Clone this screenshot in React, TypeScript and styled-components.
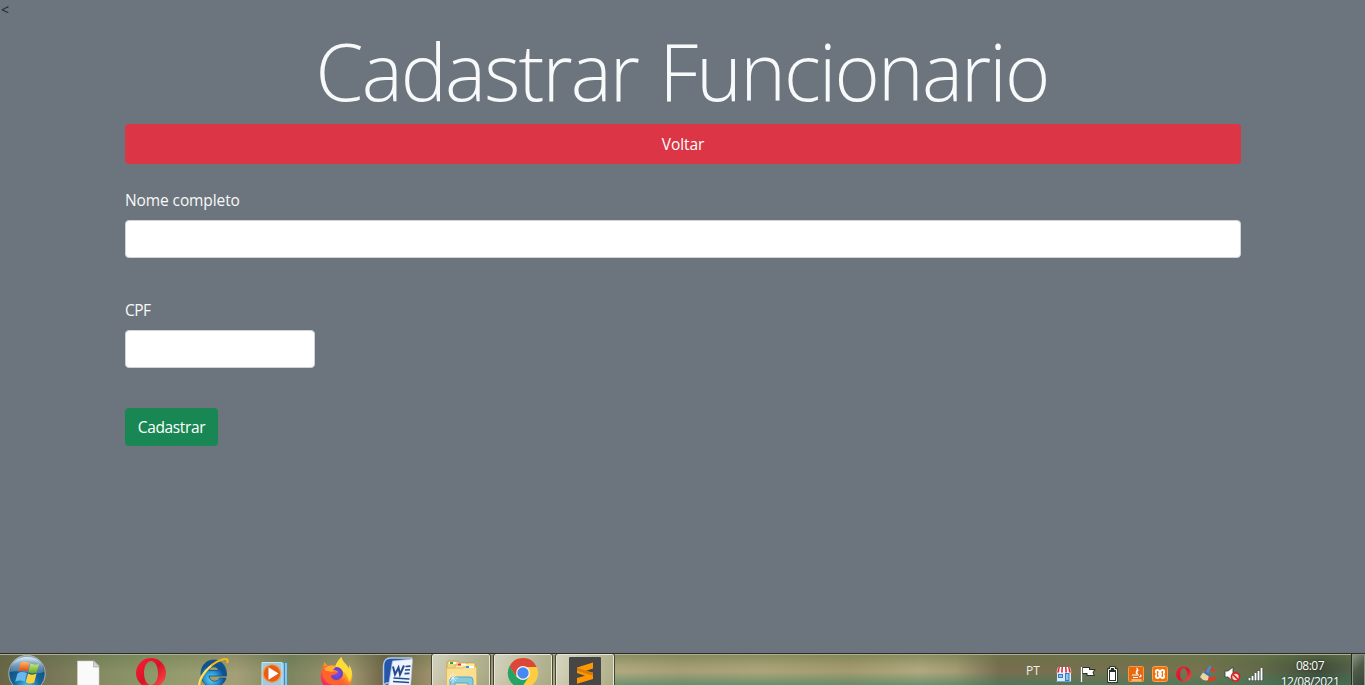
import React from "react";
import styled, { createGlobalStyle } from "styled-components";

const GlobalStyle = createGlobalStyle`
  *, *::before, *::after { box-sizing: border-box; }
  html, body { margin: 0; padding: 0; }
  body {
    background: #6c757d;
    color: #212529;
    font-family: "Open Sans", "Noto Sans", sans-serif;
    font-size: 16px;
    line-height: 24px;
    overflow: hidden;
  }
`;

const Screen = styled.div`
  display: flex;
  flex-direction: column;
  height: 685px;
  width: 1365px;
  overflow: hidden;
`;

const Page = styled.main`
  flex: 1;
  min-height: 0;
`;

const Stray = styled.div`
  height: 24px;
  padding: 1px 0 0 1px;
  font-size: 14px;
  line-height: 18px;
`;

const Container = styled.div`
  width: 1116px;
  margin-left: 125px;
`;

const Title = styled.h1`
  margin: 0 0 4px;
  height: 96px;
  line-height: 92px;
  font-size: 80px;
  font-weight: 300;
  letter-spacing: -1.9px;
  word-spacing: 3px;
  text-indent: -2px;
  text-align: center;
  white-space: nowrap;
  color: #f8f9fa;
  transform: scaleX(0.967);
`;

const Button = styled.button<{ $tone: "danger" | "success"; $wide?: boolean }>`
  display: block;
  width: ${(p) => (p.$wide ? "100%" : "93px")};
  height: ${(p) => (p.$wide ? "40px" : "38px")};
  padding: 0;
  border: 0;
  border-radius: 4px;
  background: ${(p) => (p.$tone === "danger" ? "#dc3545" : "#198754")};
  color: #fff;
  font: inherit;
  font-size: 15.5px;
  letter-spacing: ${(p) => (p.$wide ? "-0.1px" : "-0.35px")};
`;

const Form = styled.form`
  padding-top: 24px;
`;

const Field = styled.div<{ $gap: number }>`
  margin-bottom: ${(p) => p.$gap}px;
`;

const Label = styled.label<{ $spacing?: number }>`
  display: block;
  height: 24px;
  margin-bottom: 8px;
  font-size: 15.5px;
  letter-spacing: ${(p) => p.$spacing ?? -0.1}px;
  color: #f8f9fa;
`;

const Input = styled.input<{ $width: string }>`
  display: block;
  width: ${(p) => p.$width};
  height: 38px;
  padding: 6px 12px;
  border: 1px solid #ced4da;
  border-radius: 4px;
  background: #fff;
  font: inherit;
`;

const Taskbar = styled.footer`
  display: flex;
  height: 32px;
  flex: none;
  overflow: hidden;
  border-top: 1px solid #2b2b28;
  box-shadow: inset 0 1px 0 #aeb096;
  background:
    linear-gradient(180deg, rgba(110, 130, 70, 0.35) 0%, rgba(130, 130, 85, 0) 35%, rgba(130, 130, 85, 0) 55%, rgba(50, 125, 95, 0.55) 100%) 615px 0 / 750px 100% no-repeat,
    linear-gradient(180deg, rgba(80, 100, 60, 0.3) 0%, rgba(130, 130, 85, 0) 60%),
    linear-gradient(90deg, #696648 0, #777557 50px, #858c62 105px, #8c9969 150px, #a49f76 235px, #7c8560 290px,
      #a09770 350px, #6f6548 385px, #9b9069 430px, #b4ab80 620px, #aaa078 680px, #b0a67b 760px, #a79c70 850px,
      #b4aa80 920px, #a79e75 955px, #796e50 1000px, #79704f 1060px, #777550 1200px, #616949 1265px,
      #3f4b39 1320px, #536048 1350px, #45523e 1365px);
`;

const StartButton = styled.div`
  width: 57px;
  height: 31px;
  flex: none;
`;

const Task = styled.div<{ $open?: boolean }>`
  width: 62px;
  height: 31px;
  flex: none;
  padding: ${(p) => (p.$open ? "0 0 0 3px" : "0 1px")};
  svg {
    display: block;
    width: ${(p) => (p.$open ? 58 : 60)}px;
    height: 31px;
    ${(p) =>
      p.$open &&
      `border: solid #e6e7d9; border-width: 1px 1px 0; border-radius: 2px 2px 0 0;
       outline: 1px solid #45443a;
       background: linear-gradient(125deg, rgba(230,231,216,.78), rgba(206,208,183,.62) 55%, rgba(166,173,136,.6));`}
  }
`;

const Tray = styled.div`
  display: flex;
  align-items: flex-start;
  margin-left: auto;
  color: #fff;
  font-family: "Open Sans", "Noto Sans", sans-serif;
`;

const Language = styled.span`
  width: 26px;
  padding-top: 8px;
  font-size: 12px;
  line-height: 18px;
  color: #eeeee8;
`;

const TrayIcon = styled.svg`
  width: 24px;
  height: 31px;
  flex: none;
`;

const Clock = styled.div`
  width: 84px;
  padding: 4px 0 0;
  text-align: center;
  font-size: 12px;
  line-height: 16px;
  letter-spacing: -0.5px;
  text-shadow: 0 0 2px rgba(0, 0, 0, 0.5);
`;

const ShowDesktop = styled.div`
  width: 13px;
  height: 31px;
  border: 1px solid #8c9483;
  border-bottom: 0;
  outline: 1px solid #252e24;
  background: linear-gradient(135deg, #8b9283, #4e5b49 45%, #354638);
`;

const OperaShape = ({ id }: { id: string }) => (
  <>
    <defs>
      <linearGradient id={id} x1="0" y1="0" x2="1" y2="1">
        <stop offset="0" stopColor="#ff1b36" />
        <stop offset=".5" stopColor="#d91426" />
        <stop offset="1" stopColor="#ff554e" />
      </linearGradient>
    </defs>
    <path
      fill={`url(#${id})`}
      fillRule="evenodd"
      d="M15 0a15 15 0 1 0 0 30a15 15 0 0 0 0-30M15 3c4 0 7 5.400 7 12s-3 12-7 12s-7-5.400-7-12s3-12 7-12"
    />
  </>
);

const StartIcon = () => (
  <svg width="57" height="31" viewBox="0 0 57 31">
    <defs>
      <radialGradient id="orb" cx=".5" cy=".85" r=".8">
        <stop offset="0" stopColor="#3bc8ee" />
        <stop offset=".45" stopColor="#126698" />
        <stop offset=".85" stopColor="#164a79" />
        <stop offset="1" stopColor="#8eabc0" />
      </radialGradient>
      <linearGradient id="shine" x2="0" y2="1">
        <stop offset="0" stopColor="#edf6fa" stopOpacity=".85" />
        <stop offset="1" stopColor="#8bb4d1" stopOpacity=".35" />
      </linearGradient>
      <linearGradient id="redPane" x2="0" y2="1"><stop stopColor="#ffb85a" /><stop offset="1" stopColor="#e23f11" /></linearGradient>
      <linearGradient id="greenPane" x2="0" y2="1"><stop stopColor="#c9e878" /><stop offset="1" stopColor="#65a827" /></linearGradient>
    </defs>
    <circle cx="27" cy="19.500" r="18.200" fill="url(#orb)" stroke="#a7b5af" />
    <path d="M10 18C10 8 18 3 27 3s17 5 17 15c-9 4-25-3-34 0Z" fill="url(#shine)" />
    <path d="M20.500 9c3-2 6-1 9 0l-2 8.500c-3-1.500-6-1.500-9.400.4Z" fill="url(#redPane)" />
    <path d="M30.500 9.500c3 1.500 6 1.500 8.500.2l-2.300 8.600c-3 1.600-5.600 1.300-8.300 0Z" fill="url(#greenPane)" />
    <path d="M17.500 19.400c3-1.900 6.500-1.900 9.500-.3l-2.300 8.600c-2.700-1.600-5.800-1.700-9.500 0Z" fill="#69b7ef" />
    <path d="M28 19.500c3 1.600 6 1.500 8.600.1l-2.400 8.800c-3 1.700-5.700 1.300-8.400-.2Z" fill="#ffd03c" />
  </svg>
);

const FileIcon = () => (
  <svg viewBox="1 0 60 31">
    <path d="M20.500 7H37l5 5v23H20.500Z" fill="#fafafa" stroke="#d2d2ca" strokeWidth=".6" />
    <path d="M36.500 7v6H42Z" fill="#d5d7d7" stroke="#969d98" strokeWidth=".6" />
  </svg>
);

const OperaIcon = () => (
  <svg viewBox="1 0 60 31"><g transform="translate(17 4)"><OperaShape id="operaLarge" /></g></svg>
);

const IeIcon = () => (
  <svg viewBox="1 0 60 31">
    <defs>
      <radialGradient id="ie" cx=".4" cy=".7"><stop stopColor="#65d8fa" /><stop offset=".6" stopColor="#218ed1" /><stop offset="1" stopColor="#10528f" /></radialGradient>
    </defs>
    <path fill="url(#ie)" stroke="#144f80" strokeWidth=".8" fillRule="evenodd" d="M45.500 22H28c0 6 9 7 10.500 2h6.500c-2 6-6 9-12 9c-8 0-13-5-13-13S25 6 33 6s13 7 12.500 16M28 16.500h9.500c-.5-5-9-5-9.500 0" />
    <path d="M19 33C17 25 28 10 40 6c5-2 8-1 6 3" fill="none" stroke="#f5b817" strokeWidth="2.200" />
    <path d="M18 33c-1-7 5-16 12-21" fill="none" stroke="#ffe46f" strokeWidth="1.600" />
  </svg>
);

const PlayerIcon = () => (
  <svg viewBox="1.500 0 60 31">
    <path d="M26 8h19v24H26Z" fill="#408ebc" />
    <path d="M43.500 9v22M40.500 9v22" stroke="#b9e2f2" strokeWidth="1.300" />
    <path d="M19.500 8.500h20V34h-20Z" fill="#9bcde2" stroke="#c4e6ef" />
    <circle cx="29.500" cy="19.500" r="8.800" fill="#e95c15" stroke="#f79b4e" strokeWidth="1.200" />
    <path d="M26 13.300v12.400L36 19.500Z" fill="#fff" />
  </svg>
);

const FirefoxIcon = () => (
  <svg viewBox="1 0 60 31">
    <defs>
      <linearGradient id="fox" x1=".9" y1="0" x2=".2" y2="1"><stop stopColor="#fff14d" /><stop offset=".35" stopColor="#ffc928" /><stop offset=".65" stopColor="#ff672d" /><stop offset="1" stopColor="#f52166" /></linearGradient>
      <radialGradient id="globe"><stop stopColor="#8c49ef" /><stop offset="1" stopColor="#5844c4" /></radialGradient>
    </defs>
    <path d="M19.500 8c1 2 3 4 5 4c2-1 4-1 6 0C32 8 34 5 36.500 3c.5 5 5.500 7 7.500 12c1-1 0-4 0-4c4 5 5 17-1 22H20c-7-8-4-16-.5-25" fill="url(#fox)" />
    <path d="M36.500 3c.5 5 5.500 7 7.500 12c1-1 0-4 0-4c3 4 4 12 0 17c-1-6-4-10-8-12c-2-1-5-1-6-3c1-4 4-7 6.500-10" fill="#ffdb35" />
    <circle cx="31.500" cy="19.500" r="6.500" fill="url(#globe)" />
    <path d="M17 19c0-6 4-8 7-7c2-1 4-1 6 0c-1 2-2 3-3 4c3 0 5 1 6 2c-2 3-5 2-7 4c0 6 9 7 14 2c-2 9-20 11-23-5" fill="#ff632d" />
    <path d="M19.500 14c4-3 7.500-3 11.500-2c-1 2-2 3-3 4c2 0 4 1 5 2c-3-1-5-1-7 0c-3-2-5.500 1-6.500-4" fill="#ffab31" />
  </svg>
);

const WordIcon = () => (
  <svg viewBox="-1.500 0 60 31">
    <path d="M21 4h21l-2 25H17l-3 2V12c0-5 3-8 7-8" fill="#2457ac" stroke="#b5c8e8" strokeWidth="1.500" />
    <path d="m23 7l20-2l-2 29l-22-2Z" fill="#eef4fc" stroke="#b9c7dc" strokeWidth=".7" />
    <path d="m23.500 12.500l2 8l3.500-7l1.500 7l4-9" fill="none" stroke="#244a91" strokeWidth="2" />
    <path d="m36 12.500l5-.4m-5.500 3.900l5-.3m-5.500 3.900l5-.2M24 24l16 1m-16.500 2.500l16 1" fill="none" stroke="#244a91" strokeWidth="1.600" />
  </svg>
);

const ExplorerIcon = () => (
  <svg viewBox="3 1 56 30">
    <path d="M17 9q0-2 2-2h9l2 2h13q3 0 3 3v20H17Z" fill="#edd484" stroke="#c8a347" />
    <path d="M25 11h10l2-2h8v7H25Z" fill="#ffe9a2" stroke="#c4a144" strokeWidth=".7" />
    <path d="M16.500 14h16l2-1h12v19h-30Z" fill="#f8df91" stroke="#dfba63" />
    <path d="M19 8h7v2h-7M28 9.500h8v2h-8M36 12h8v2h-8" fill="#fff" />
    <path d="M20 8h3v2h-3Z" fill="#2aac27" /><path d="M28 9.500h3v2h-3Z" fill="#e43523" /><path d="M36 12h3v2h-3Z" fill="#2a97e5" />
    <path d="M20 33V26q0-3 3-3h17q3 0 3 3v7h-5v-4H25v4Z" fill="#84cbe1" stroke="#55a8c9" />
    <path d="M23 19v10m-5-5h10m-8-3l6 6m0-6l-6 6" stroke="#fff" strokeWidth=".6" />
  </svg>
);

const ChromeIcon = () => (
  <svg viewBox="3 1 56 30">
    <circle cx="31" cy="19" r="15" fill="#ffcd42" />
    <path d="M17.500 12.500A15 15 0 0 1 44.700 13H31l-7 9Z" fill="#dc4638" />
    <path d="M17.500 12A15 15 0 0 0 29.500 34L37 22.500l-12 1Z" fill="#23a366" />
    <circle cx="31" cy="19" r="6.900" fill="#f4f6f5" /><circle cx="31" cy="19" r="5.700" fill="#4688f1" />
  </svg>
);

const SublimeIcon = () => (
  <svg viewBox="3 1 56 30">
    <rect x="15" y="3" width="32" height="34" rx="1" fill="#464646" />
    <path d="M23 13.500L39 8.500v6l-7 2.300l7 2V25l-16 4.800V24l8-2.300l-8-2.600Z" fill="#ff9800" />
    <path d="m23 13.500l9 3.300l7 2v3l-16-5Z" fill="#d77c05" />
  </svg>
);

const TrayIcons = () => (
  <>
    <TrayIcon viewBox="0 0 24 31">
      <path d="M5 18h14v9H5Z" fill="#dcecf5" /><path d="M6 20h5v4H6ZM13 19h4.500v8H13Z" fill="#3979bf" />
      <path d="M7 21h3v2H7ZM14 20h2.500v6H14Z" fill="#8ac4ea" />
      <path d="M6 13h12l1.500 5.500h-15Z" fill="#fff" />
      <path d="M6.500 13h1.400l-.9 5.500H5ZM9.500 13H11l-.3 5.500H9ZM13 13h1.500l.5 5.500h-1.700ZM16.100 13h1.400l1.500 5.500h-2Z" fill="#e12b3d" />
      <path d="M4 27.500h15" stroke="#6ba4d1" />
    </TrayIcon>
    <TrayIcon viewBox="0 0 24 31">
      <path d="M5.500 13v15M7 14h6v2h5l-1.500 2.500l1 2.500h-6v-2H7Z" fill="#fff" stroke="#29372b" strokeWidth="2" />
      <path d="M5.500 13v15" stroke="#fff" strokeWidth="1.500" /><path d="M7 14h6v2h5l-1.500 2.500l1 2.500h-6v-2H7Z" fill="#fff" />
    </TrayIcon>
    <TrayIcon viewBox="0 0 24 31">
      <path d="M10 13h5v2h2v13H8V15h2Z" fill="#263228" stroke="#202820" strokeWidth="1.500" />
      <path d="M10.500 13.500h4v2h2v12h-8v-12h2Z" fill="none" stroke="#fff" /><path d="M10 18h5v8h-5Z" fill="#fff" />
    </TrayIcon>
    <TrayIcon viewBox="0 0 24 31">
      <rect x="4.500" y="12.500" width="15" height="15" rx="1" fill="#e6690b" stroke="#f39b4d" />
      <path d="M12.500 14c3 2-2 3 0 6m2-4c-2 1-2 2-1 4M8 21h7m-6 2.500h5m-6.500 2.500h10M16 21c2 0 1 2-1 2" fill="none" stroke="#fff" strokeWidth="1.200" />
    </TrayIcon>
    <TrayIcon viewBox="0 0 24 31">
      <rect x="4.500" y="12.500" width="15" height="15" rx="2" fill="#ef720d" stroke="#f6a359" />
      <circle cx="9.500" cy="17.700" r="1.700" fill="none" stroke="#fff" strokeWidth="1.800" />
      <circle cx="14.500" cy="17.700" r="1.700" fill="none" stroke="#fff" strokeWidth="1.800" />
      <circle cx="9.500" cy="22.300" r="1.700" fill="none" stroke="#fff" strokeWidth="1.800" />
      <circle cx="14.500" cy="22.300" r="1.700" fill="none" stroke="#fff" strokeWidth="1.800" />
      <path d="M9 17.500h1.500v1.500h3v-1.500H15v5h-1.500V21h-3v1.500H9Z" fill="#ef720d" />
      <path d="M10 20h4" stroke="#fff" strokeWidth="1.800" />
    </TrayIcon>
    <TrayIcon viewBox="0 0 24 31"><g transform="translate(4 12.500) scale(.51)"><OperaShape id="operaSmall" /></g></TrayIcon>
    <TrayIcon viewBox="0 0 24 31">
      <path d="M19 16c-4-5-11-3-11 4c0 8 8 9 12 5v-3c-4 3-8 1-8-2c0-4 4-4 7-2Z" fill="#dc3b27" />
      <path d="m13.500 11.500l2 1l-3.500 8l-3-2Z" fill="#3a91d3" /><path d="m8 17l5 4l-1 5q-4 2-8-3Z" fill="#f0d3a0" /><path d="m8.500 16.500l5.500 3.500l-1 2.500l-6-4Z" fill="#3478b7" />
    </TrayIcon>
    <TrayIcon viewBox="0 0 24 31">
      <path d="M5 17h3l5-4v14l-5-4H5Z" fill="#fff" stroke="#334036" strokeWidth=".8" />
      <circle cx="15.500" cy="23" r="4" fill="#efd5d0" stroke="#db2020" strokeWidth="1.700" /><path d="m13 20.500l5 5" stroke="#db2020" strokeWidth="1.700" />
    </TrayIcon>
    <TrayIcon viewBox="0 0 24 31">
      <path d="M5.500 24v3M8.500 22v5M11.500 19v8M14.500 17v10M17.500 14v13" stroke="#26322b" strokeWidth="3.300" />
      <path d="M5.500 24v2.500M8.500 22v4.500M11.500 19v7.500M14.500 17v9.500M17.500 14v12.500" stroke="#fff" strokeWidth="2" />
    </TrayIcon>
  </>
);

export default function App() {
  return (
    <Screen>
      <GlobalStyle />
      <Page>
        <Stray>&lt;</Stray>
        <Container>
          <Title>Cadastrar Funcionario</Title>
          <Button $tone="danger" $wide>Voltar</Button>
          <Form>
            <Field $gap={40}>
              <Label htmlFor="nome">Nome completo</Label>
              <Input id="nome" $width="100%" />
            </Field>
            <Field $gap={40}>
              <Label htmlFor="cpf" $spacing={-0.5}>CPF</Label>
              <Input id="cpf" $width="190px" />
            </Field>
            <Button $tone="success" type="button">Cadastrar</Button>
          </Form>
        </Container>
      </Page>
      <Taskbar>
        <StartButton><StartIcon /></StartButton>
        <Task><FileIcon /></Task>
        <Task><OperaIcon /></Task>
        <Task><IeIcon /></Task>
        <Task><PlayerIcon /></Task>
        <Task><FirefoxIcon /></Task>
        <Task><WordIcon /></Task>
        <Task $open><ExplorerIcon /></Task>
        <Task $open><ChromeIcon /></Task>
        <Task $open><SublimeIcon /></Task>
        <Tray>
          <Language>PT</Language>
          <TrayIcons />
          <Clock>08:07<br />12/08/2021</Clock>
          <ShowDesktop />
        </Tray>
      </Taskbar>
    </Screen>
  );
}
